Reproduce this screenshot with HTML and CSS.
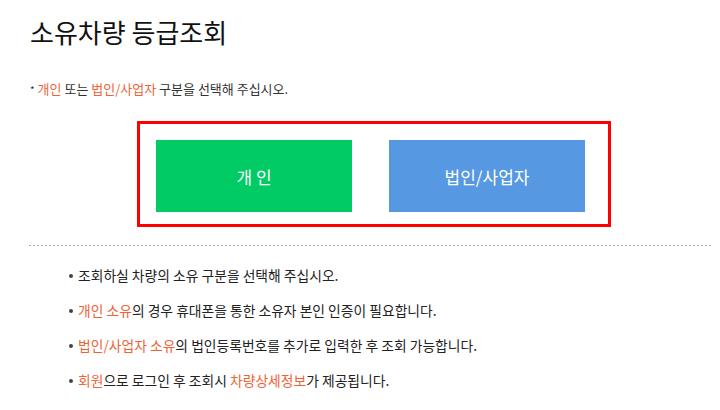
FILE: index.html
```html
<html>
	<head>
		<title>소유차량 등급조회</title>
<link rel="stylesheet" href="styles.css">
	</head>
	<body>
		<div id="content">
			<h1 class="title">소유차량 등급조회</h1>
			<p class="notice">
				<span class="star">*</span> <span class="hl">개인</span> 또는 <span class="hl">법인/사업자</span> 구분을 선택해 주십시오.
			</p>
			<div class="choice">
				<div class="btn btn_person">개 인</div>
				<div class="btn btn_corp">법인/사업자</div>
			</div>
			<div class="line"></div>
			<ul class="guide">
				<li>조회하실 차량의 소유 구분을 선택해 주십시오.</li>
				<li><span class="hl">개인 소유</span>의 경우 휴대폰을 통한 소유자 본인 인증이 필요합니다.</li>
				<li><span class="hl">법인/사업자 소유</span>의 법인등록번호를 추가로 입력한 후 조회 가능합니다.</li>
				<li><span class="hl">회원</span>으로 로그인 후 조회시 <span class="hl">차량상세정보</span>가 제공됩니다.</li>
			</ul>
		</div>
	</body>
</html>
```

FILE: styles.css
```css
body	{
	margin: 0;
	background: white;
	font-family: "Noto Sans CJK KR", "Noto Sans", sans-serif;
	color: #222;
}
#content	{
	padding: 12px 0 0 30px;
}
.title	{
	margin: 0;
	font-size: 26px;
	font-weight: normal;
	color: #111;
	line-height: 40px;
}
.notice	{
	margin: 28px 0 0 0;
	font-size: 13px;
	line-height: 18px;
	color: #333;
}
.star	{
	font-size: 10px;
}
.hl	{
	color: #ef6436;
}
.choice	{
	display: flex;
	gap: 37px;
	width: 432px;
	margin: 22px 0 0 107px;
	padding: 16px 20px 12px 16px;
	border: 3px solid #ff0000;
}
.btn	{
	width: 196px;
	height: 72px;
	display: flex;
	align-items: center;
	justify-content: center;
	color: white;
	font-size: 17px;
}
.btn_person	{
	background: #00cb64;
}
.btn_corp	{
	background: #5699e2;
}
.line	{
	height: 1px;
	margin: 18px 7px 0 -1px;
	background: repeating-linear-gradient(to right, #aaa 0, #aaa 2px, transparent 2px, transparent 4px);
}
.guide	{
	margin: 12px 0 0 0;
	padding: 0 0 0 48px;
	list-style: none;
	font-size: 13.8px;
	color: #222;
}
.guide li	{
	position: relative;
	line-height: 35px;
}
.guide li::before	{
	content: "";
	position: absolute;
	left: -9px;
	top: 16px;
	width: 4px;
	height: 4px;
	border-radius: 50%;
	background: #444;
}
```
